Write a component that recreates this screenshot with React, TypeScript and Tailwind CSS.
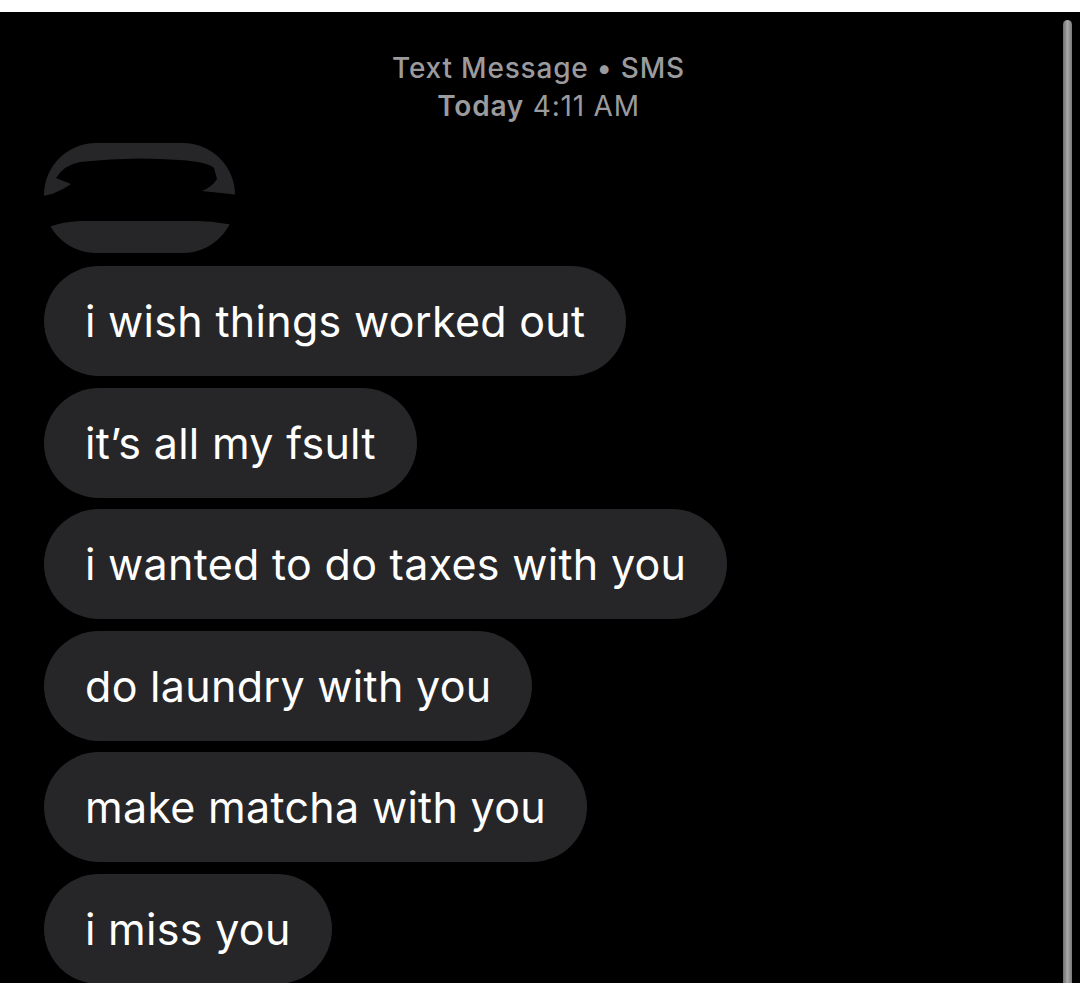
import React from "react";

const messages = [
  "i wish things worked out",
  "it’s all my fsult",
  "i wanted to do taxes with you",
  "do laundry with you",
  "make matcha with you",
  "i miss you",
];

function RedactedBubble() {
  return (
    <svg width="191" height="110" viewBox="0 0 191 110" className="block">
      <rect x="0" y="0" width="191" height="110" rx="52" fill="#262628" />
      {/* scribbled-out text */}
      <path
        d="M -5 54 L 8 51 Q 22 45 27 41 L 12 35 Q 20 22 36 19 Q 86 13 136 17 Q 164 19 170 25 L 173 36 Q 168 44 158 48 L 196 52 L 196 80 Q 186 81 183 81 Q 168 78 153 78 L 103 78 L 36 78 Q 18 79 8 83 L -5 86 Z"
        fill="#000"
      />
    </svg>
  );
}

export default function App() {
  return (
    <div className="w-[1080px] h-[983px] overflow-hidden bg-white pt-[12px] font-['Inter','Liberation_Sans',sans-serif]">
      <div className="flex h-full bg-black">
        <div className="flex-1 flex flex-col">
          {/* Header */}
          <div className="pt-[37px] pl-[14px] text-center text-[28px] leading-[38px] tracking-[0.8px] text-[#9b9b9e]">
            <div className="font-medium">Text Message • SMS</div>
            <div>
              <span className="font-semibold">Today</span> 4:11 AM
            </div>
          </div>

          {/* Messages */}
          <div className="pl-[44px] pt-[18px] flex flex-col items-start">
            <RedactedBubble />
            <div className="mt-[13px] flex flex-col items-start gap-[11.5px]">
              {messages.map((m) => (
                <div
                  key={m}
                  className="h-[110px] rounded-full bg-[#262628] px-[41px] flex items-center text-white text-[43px] leading-[110px] tracking-[0.3px] whitespace-nowrap"
                >
                  {m}
                </div>
              ))}
            </div>
          </div>
        </div>

        {/* Scrollbar */}
        <div className="w-[9px] pt-[8px] mr-[8px]">
          <div className="h-full rounded-t-full bg-gradient-to-r from-[#6f6f6f] via-[#a8a8a8] to-[#7a7a7a]" />
        </div>
      </div>
    </div>
  );
}
